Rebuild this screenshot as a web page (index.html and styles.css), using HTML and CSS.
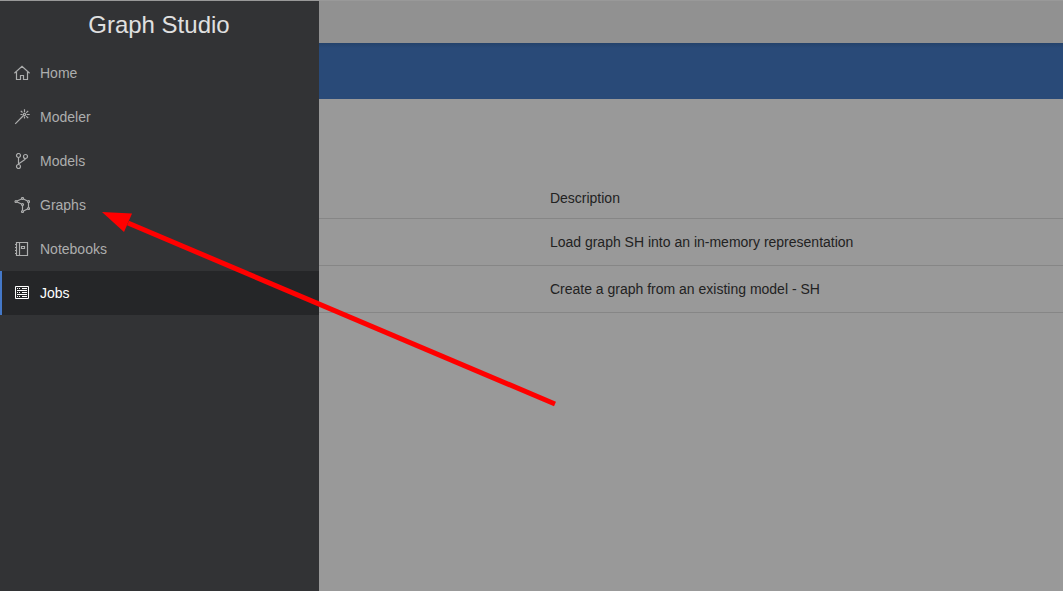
FILE: index.html
```
<!DOCTYPE html>
<html lang="en">
<head>
<meta charset="utf-8">
<meta name="viewport" content="width=device-width, initial-scale=1">
<title>Graph Studio</title>
<link rel="stylesheet" href="styles.css">
</head>
<body>
<div class="app">
  <aside class="sidebar">
    <h1 class="title">Graph Studio</h1>
    <nav class="nav">
      <a class="nav-item" href="#home">
        <svg class="icon" viewBox="0 0 16 16" aria-hidden="true"><path d="M.4 8.3 8 1.2l7.600 7.100M2.500 7v7.500h4v-4h3v4h4V7"/></svg>
        Home
      </a>
      <a class="nav-item" href="#modeler">
        <svg class="icon" viewBox="0 0 16 16" aria-hidden="true"><path d="M1.200 14.800 9.500 6.500M10.500 .3v3M12.700 5.500h3M6.800 1.800l1.700 1.700M14.200 1.800l-2 2M12.200 7.200l2 2M6.500 5.500h2M10.500 7.500v2"/><circle cx="10.500" cy="5.500" r="1.100"/></svg>
        Modeler
      </a>
      <a class="nav-item" href="#models">
        <svg class="icon" viewBox="0 0 16 16" aria-hidden="true"><circle cx="4.500" cy="2.500" r="2"/><circle cx="11.500" cy="3.500" r="2"/><circle cx="4.500" cy="13.500" r="2"/><path d="M4.500 4.500v7M11 5.500v1L4.800 10.800"/></svg>
        Models
      </a>
      <a class="nav-item" href="#graphs">
        <svg class="icon" viewBox="0 0 16 16" aria-hidden="true"><path d="m3 4 4.500-2M9.500 2l4 2M14.500 5.500v5M13.500 12l-4 2M8.500 13V8.500M7.500 7 3 5"/><circle cx="2" cy="4.500" r="1"/><circle cx="8.500" cy="1.500" r="1"/><circle cx="14.500" cy="4.500" r="1"/><circle cx="14.500" cy="11.500" r="1"/><circle cx="8.500" cy="14.500" r="1"/><circle cx="8.500" cy="7.500" r="1"/></svg>
        Graphs
      </a>
      <a class="nav-item" href="#notebooks">
        <svg class="icon" viewBox="0 0 16 16" aria-hidden="true"><path d="M2.500 1.500h11v13h-11zM5.500 1.500v13M7.500 5.500h3v2h-3zM1 3.500h2M1 6.500h2M1 9.500h2M1 12.500h2"/></svg>
        Notebooks
      </a>
      <a class="nav-item active" href="#jobs" aria-current="page">
        <svg class="icon" viewBox="0 0 16 16" aria-hidden="true"><path d="M1.500 1.500h13v12h-13zM3 3.500h1M5 3.500h1M8 3.500h5M3 5.500h10M3 7.500h1M5 7.500h1M8 7.500h5M3 9.500h10M3 11.500h1M5 11.500h1M8 11.500h5"/></svg>
        Jobs
      </a>
    </nav>
  </aside>
  <main class="main">
    <header class="topbar"></header>
    <div class="banner"></div>
    <table class="jobs">
      <thead><tr><th scope="col">Description</th></tr></thead>
      <tbody>
        <tr><td>Load graph SH into an in-memory representation</td></tr>
        <tr><td>Create a graph from an existing model - SH</td></tr>
      </tbody>
    </table>
  </main>
  <svg class="pointer" width="460" height="200" viewBox="0 0 460 200" aria-hidden="true">
    <path class="shaft" d="M26 13 453 194"/>
    <path class="head" d="m0 2 30 1.500-8 18.500z"/>
  </svg>
</div>
</body>
</html>
```
FILE: styles.css
```
* {
  box-sizing: border-box;
}

body {
  margin: 0;
  font: 14px/20px "Liberation Sans", Arial, sans-serif;
  background: #999;
}

.app {
  position: relative;
  display: grid;
  grid-template-columns: 30% 1fr;
  min-height: 100vh;
  border-top: 1px solid #999;
  overflow: hidden;
}

.sidebar {
  background: #323335;
}

.title {
  margin: 0;
  padding: 8px 1px 10px 0;
  font-size: 24px;
  line-height: 32px;
  font-weight: 400;
  text-align: center;
  color: #e0e0e0;
}

.nav {
  display: flex;
  flex-direction: column;
}

.nav-item {
  display: flex;
  align-items: center;
  gap: 10px;
  height: 44px;
  padding-left: 12px;
  border-left: 2px solid transparent;
  color: #adaeae;
  text-decoration: none;
}

.nav-item.active {
  border-left-color: #4478c8;
  background: #252628;
  color: #fff;
}

.icon {
  width: 16px;
  height: 16px;
  flex: none;
  fill: none;
  stroke: currentColor;
  stroke-width: 1.2;
}

.active .icon {
  stroke-width: 1;
}

.topbar {
  height: 42px;
  background: #919191;
}

.banner {
  height: 56px;
  background: linear-gradient(#24426b, #294a78 5px);
}

.jobs {
  width: 100%;
  margin-top: 78px;
  border-collapse: collapse;
  color: #222;
}

.jobs th,
.jobs td {
  padding: 13px 0 13px 231px;
  border-bottom: 1px solid #868686;
  font-weight: 400;
  text-align: left;
}

.jobs th {
  padding-top: 11px;
  padding-bottom: 10px;
}

.pointer {
  position: absolute;
  left: 102px;
  top: 209px;
}

.shaft {
  fill: none;
  stroke: #f00;
  stroke-width: 5;
}

.head {
  fill: #f00;
}
```
